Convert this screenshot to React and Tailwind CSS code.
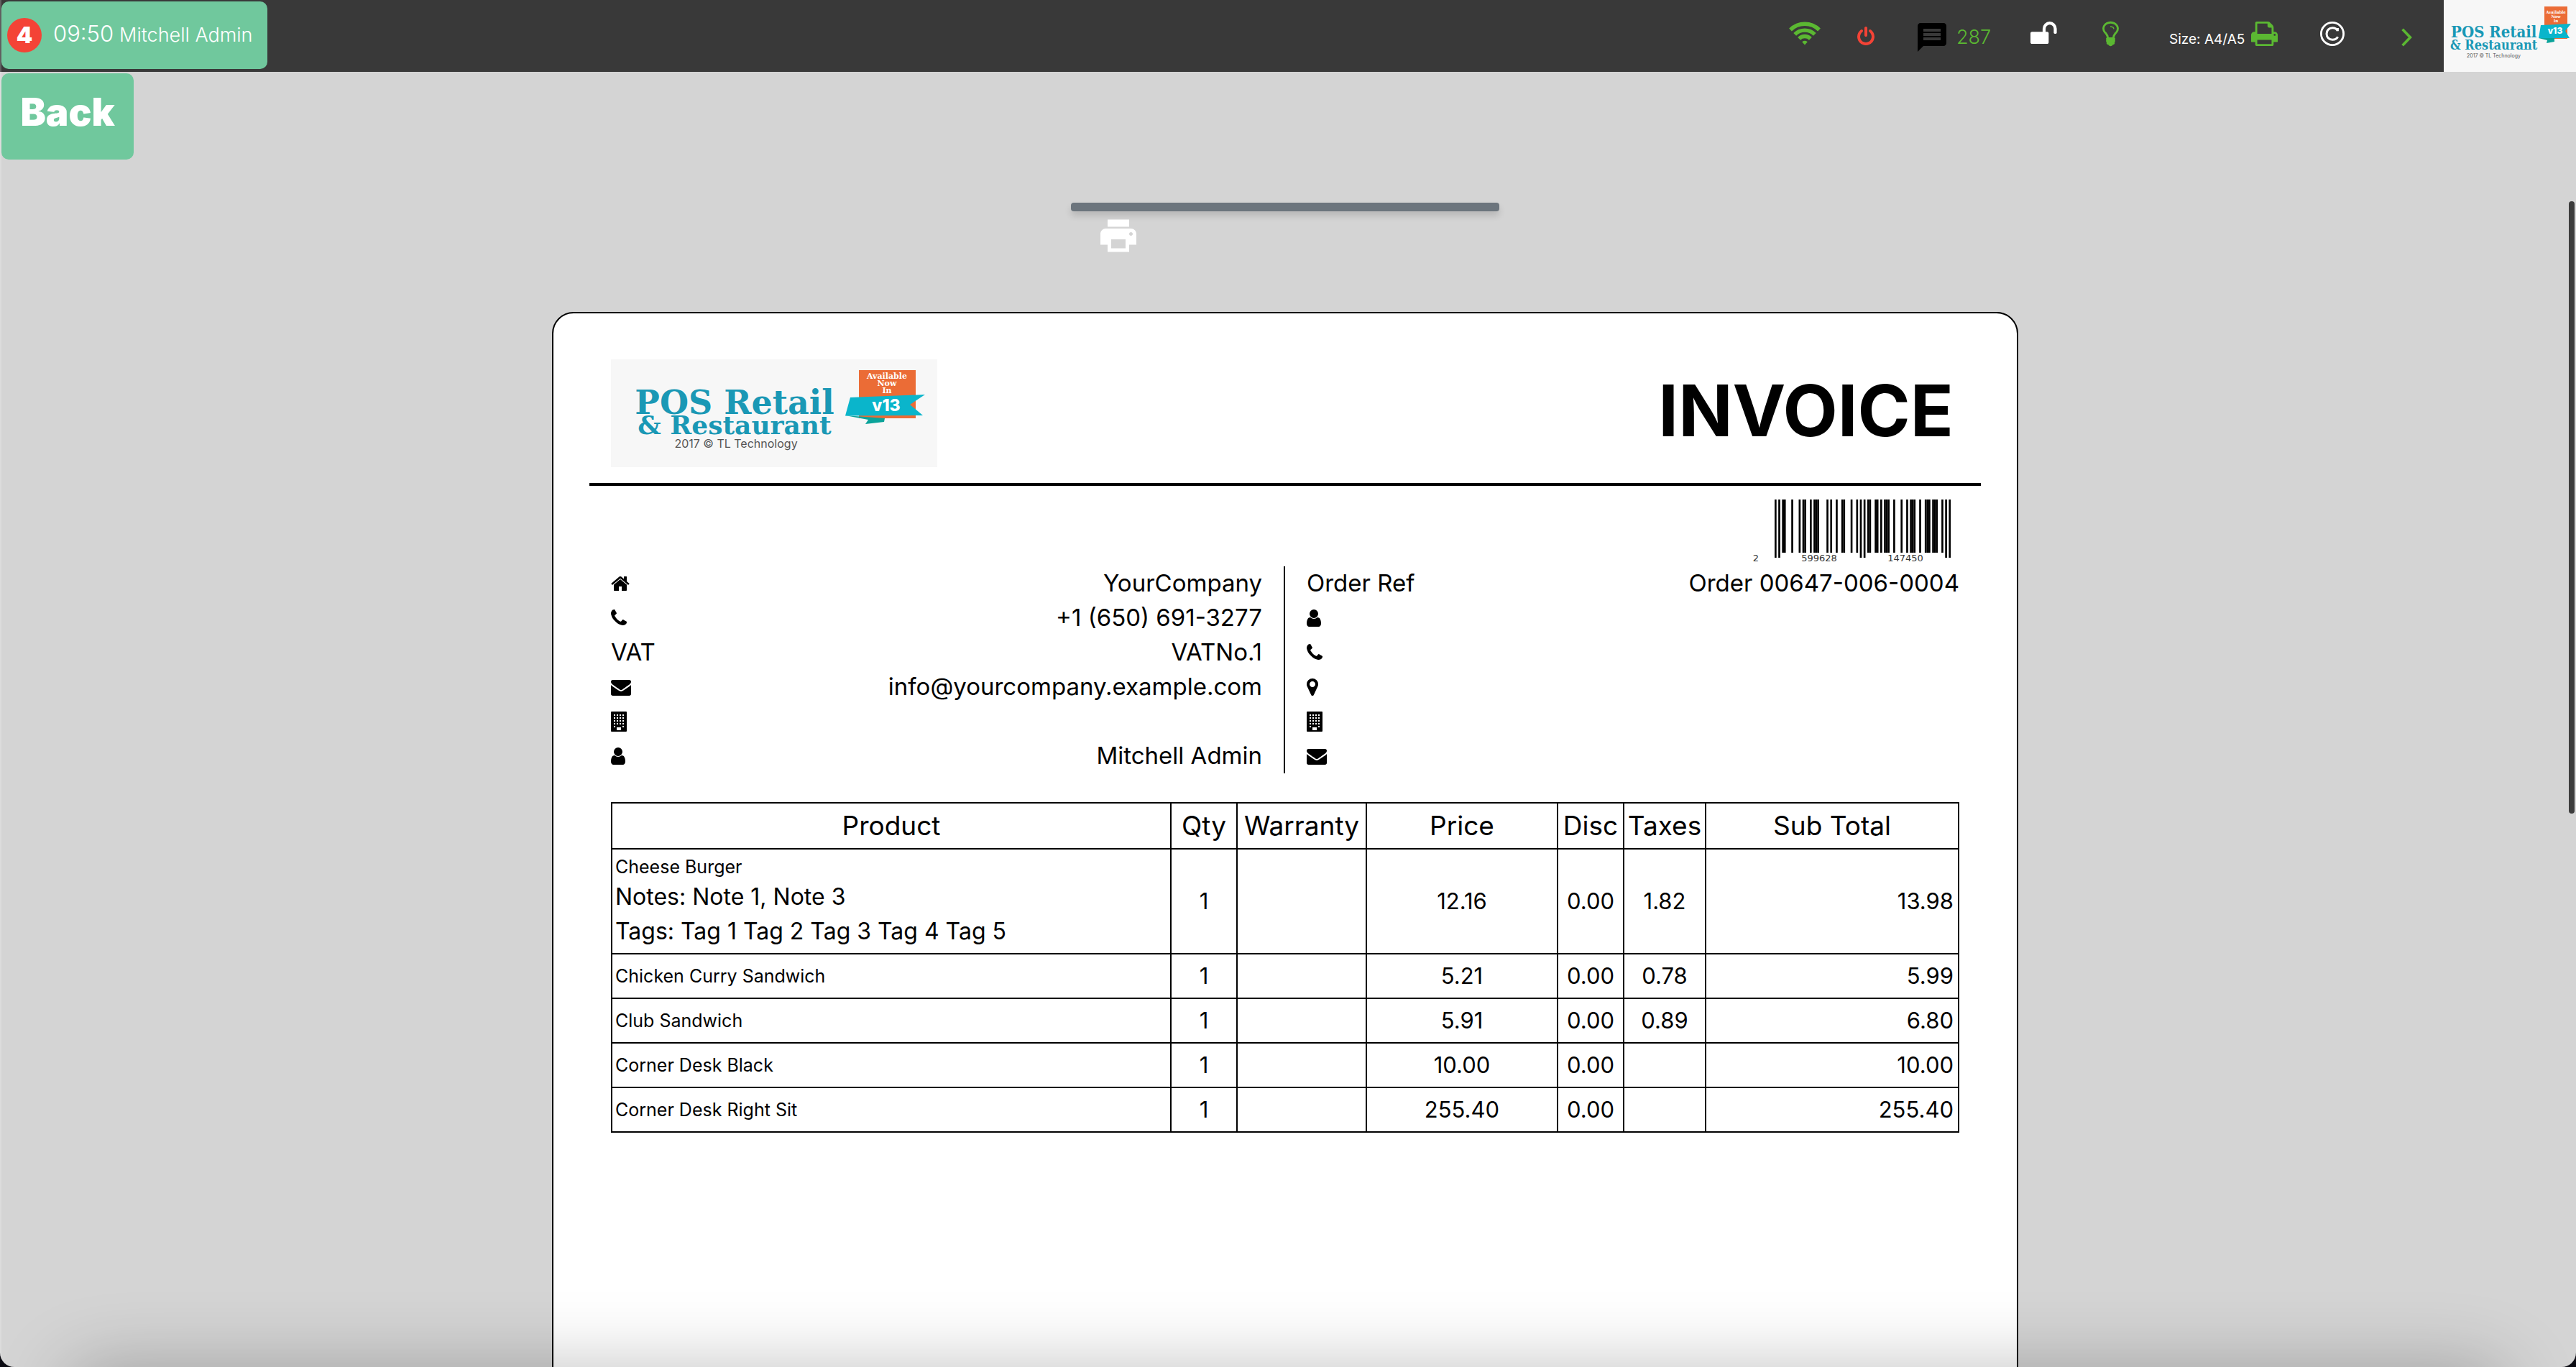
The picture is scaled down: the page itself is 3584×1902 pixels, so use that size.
import React from "react";
import { MdMessage, MdPrint } from "react-icons/md";

/* ---------- icons ---------- */

function Glyph({ x = 0, w = 1792, d, className }) {
  return (
    <svg viewBox={`${x} 0 ${w} 1792`} className={className} fill="currentColor" aria-hidden="true">
      <path d={d} />
    </svg>
  );
}

const POWER =
  "M1664 896q0 156-61 298t-164 245-245 164-298 61-298-61-245-164-164-245-61-298q0-182 80.5-343t226.5-270q43-32 95.5-25t83.5 50q32 42 24.5 94.5t-49.5 84.5q-98 74-151.5 181t-53.5 228q0 104 40.5 198.5t109.5 163.5 163.5 109.5 198.5 40.5 198.5-40.5 163.5-109.5 109.5-163.5 40.5-198.5q0-121-53.5-228t-151.5-181q-42-32-49.5-84.5t24.5-94.5q31-43 84-50t95 25q146 109 226.5 270t80.5 343zm-640-768v640q0 52-38 90t-90 38-90-38-38-90v-640q0-52 38-90t90-38 90 38 38 90z";
const HOME =
  "M1472 992v480q0 26-19 45t-45 19h-384v-384h-256v384h-384q-26 0-45-19t-19-45v-480q0-1 .5-3t.5-3l575-474 575 474q1 2 1 6zm223-69l-62 74q-8 9-21 11h-3q-13 0-21-7l-692-577-692 577q-12 8-24 7-13-2-21-11l-62-74q-8-10-7-23.5t11-21.5l719-599q32-26 76-26t76 26l244 204v-195q0-14 9-23t23-9h192q14 0 23 9t9 23v408l219 182q10 8 11 21.5t-7 23.5z";
const ENVELOPE =
  "M1792 710v794q0 66-47 113t-113 47h-1472q-66 0-113-47t-47-113v-794q44 49 101 87 362 246 497 345 57 42 92.5 65.5t94.5 48 110 24.5h2q51 0 110-24.5t94.5-48 92.5-65.5q170-123 498-345 57-39 100-87zm0-294q0 79-49 151t-122 123q-376 261-468 325-10 7-42.5 31t-54 38.5-52 32.5-57.5 27-50 9h-2q-23 0-50-9t-57.5-27-52-32.5-54-38.5-42.5-31q-91-64-262-182.5t-205-142.5q-62-42-117-115.5t-55-136.5q0-78 41.5-130t118.5-52h1472q65 0 112.5 47t47.5 113z";
const PHONE =
  "M1600 1240q0 27-10 70.5t-21 68.5q-21 50-122 106-94 51-186 51-27 0-52.5-3.5t-57.5-12.5-47.5-14.5-55.5-20.5-49-18q-98-35-175-83-128-79-264.5-215.5t-215.5-264.5q-48-77-83-175-3-9-18-49t-20.5-55.5-14.5-47.5-12.5-57.5-3.5-52.5q0-92 51-186 56-101 106-122 25-11 68.5-21t70.5-10q14 0 21 3 18 6 53 76 11 19 30 54t35 63.5 31 53.5q3 4 17.5 25t21.5 35.5 7 28.5q0 20-28.5 50t-62 55-62 53-28.5 46q0 9 5 22.5t8.5 20.5 14 24 11.5 19q76 137 174 235t235 174q2 1 19 11.5t24 14 20.5 8.5 22.5 5q18 0 46-28.5t53-62 55-62 50-28.5q14 0 28.5 7t35.5 21.5 25 17.5q25 15 53.5 31t63.5 35 54 30q70 35 76 53 3 7 3 21z";
const USER =
  "M1536 1399q0 109-62.5 187t-150.5 78h-854q-88 0-150.5-78t-62.5-187q0-85 8.5-160.5t31.5-152 58.5-131 94-89 134.5-34.5q131 128 313 128t313-128q76 0 134.5 34.5t94 89 58.5 131 31.5 152 8.5 160.5zm-256-887q0 159-112.5 271.5t-271.5 112.5-271.5-112.5-112.5-271.5 112.5-271.5 271.5-112.5 271.5 112.5 112.5 271.5z";
const MARKER =
  "M1152 640q0-106-75-181t-181-75-181 75-75 181 75 181 181 75 181-75 75-181zm256 0q0 109-33 179l-364 774q-16 33-47.5 52t-67.5 19-67.5-19-46.5-52l-365-774q-33-70-33-179 0-212 150-362t362-150 362 150 150 362z";
const UNLOCK =
  "M1728 576v256q0 26-19 45t-45 19h-64q-26 0-45-19t-19-45v-256q0-106-75-181t-181-75-181 75-75 181v192h96q40 0 68 28t28 68v576q0 40-28 68t-68 28h-960q-40 0-68-28t-28-68v-576q0-40 28-68t68-28h672v-192q0-185 131.5-316.5t316.5-131.5 316.5 131.5 131.5 316.5z";
const BULB =
  "M1120 576q0 13-9.5 22.5t-22.5 9.5-22.5-9.5-9.5-22.5q0-46-54-71t-106-25q-13 0-22.5-9.5t-9.5-22.5 9.5-22.5 22.5-9.5q50 0 99.5 16t87 54 37.5 90zm160 0q0-72-34.5-134t-90-101.5-123-62-136.5-22.5-136.5 22.5-123 62-90 101.5-34.5 134q0 101 68 180 10 11 30.5 33t30.5 33q128 153 141 298h228q13-145 141-298 10-11 30.5-33t30.5-33q68-79 68-180zm128 0q0 155-103 268-45 49-74.5 87t-59.5 95.5-34 107.5q47 28 47 82 0 37-25 64 25 27 25 64 0 52-45 81 13 23 13 47 0 46-31.5 71t-77.5 25q-20 44-60 70t-87 26-87-26-60-70q-46 0-77.5-25t-31.5-71q0-24 13-47-45-29-45-81 0-37 25-64-25-27-25-64 0-54 47-82-4-50-34-107.5t-59.5-95.5-74.5-87q-103-113-103-268 0-99 44.5-184.5t117-142 164-89 186.5-32.5 186.5 32.5 164 89 117 142 44.5 184.5z";
const PRINTER =
  "M448 1536h896v-256h-896v256zm0-640h896v-384h-160q-40 0-68-28t-28-68v-160h-640v640zm1152 64q0-26-19-45t-45-19-45 19-19 45 19 45 45 19 45-19 19-45zm128 0v416q0 13-9.5 22.5t-22.5 9.5h-224v160q0 40-28 68t-68 28h-960q-40 0-68-28t-28-68v-160h-224q-13 0-22.5-9.5t-9.5-22.5v-416q0-79 56.5-135.5t135.5-56.5h64v-544q0-40 28-68t68-28h672q40 0 88 20t76 48l152 152q28 28 48 76t20 88v256h64q79 0 135.5 56.5t56.5 135.5z";

const HomeIcon = () => <Glyph x={64} w={1664} d={HOME} className="h-7 w-[26px]" />;
const PhoneIcon = () => <Glyph x={192} w={1408} d={PHONE} className="h-7 w-[22px]" />;
const MailIcon = () => <Glyph d={ENVELOPE} className="size-7" />;
const UserIcon = () => <Glyph x={256} w={1280} d={USER} className="h-7 w-5" />;
const MarkerIcon = () => <Glyph x={384} w={1024} d={MARKER} className="h-7 w-4" />;

function BuildingIcon() {
  const windows = [];
  for (const y of [4, 8, 12, 16, 20]) {
    for (const x of [4, 8, 12, 16]) {
      if (y === 20 && (x === 8 || x === 12)) continue;
      windows.push(<rect key={`${x}-${y}`} x={x} y={y} width="2" height="2" fill="#fff" />);
    }
  }
  return (
    <svg viewBox="0 0 22 28" className="h-7 w-[22px]" aria-hidden="true">
      <rect width="22" height="28" rx="1" />
      {windows}
      <rect x="8" y="22" width="6" height="4" fill="#fff" />
    </svg>
  );
}

function WifiIcon() {
  return (
    <svg viewBox="0 0 44 33" className="h-[33px] w-11" fill="none" stroke="currentColor" strokeWidth="5.4" aria-hidden="true">
      <path d="M2 11.5a28.5 28.5 0 0 1 40 0" />
      <path d="M8.2 17.8a19.6 19.6 0 0 1 27.6 0" />
      <path d="M14.1 23.8a11.2 11.2 0 0 1 15.8 0" />
      <path d="M22 32.4l-3.8-4.2q3.8-2.9 7.6 0z" fill="currentColor" stroke="none" />
    </svg>
  );
}

function CopyrightIcon() {
  return (
    <svg viewBox="0 0 34 34" className="size-[34px]" fill="none" stroke="currentColor" aria-hidden="true">
      <circle cx="17" cy="17" r="15.6" strokeWidth="2.8" />
      <path d="M24.4 13.2V9M24.4 13q-2-4.2-7.2-4.2c-4.8 0-8.2 3.5-8.2 8.2s3.4 8.2 8.2 8.2q5.2 0 7.4-4" strokeWidth="3" />
    </svg>
  );
}

function ChevronIcon() {
  return (
    <svg viewBox="0 0 15 26" className="h-[26px] w-[15px]" fill="none" stroke="currentColor" strokeWidth="3.6" aria-hidden="true">
      <path d="M1.6 1.8L12.4 13 1.6 24.2" />
    </svg>
  );
}

/* ---------- brand logos ---------- */

function LogoSmall() {
  return (
    <svg viewBox="0 0 184 100" className="h-[100px] w-[184px] shrink-0 bg-[#f7f7f7]" role="img" aria-label="POS Retail & Restaurant">
      <g fontFamily="'DejaVu Serif Condensed','DejaVu Serif',serif" fontWeight="700">
        <rect x="140" y="9" width="32" height="45" fill="#eb6c36" />
        <g fontSize="6" fill="#fff" textAnchor="middle">
          <text x="156" y="19">Available</text>
          <text x="156" y="25">Now</text>
          <text x="156" y="31">In</text>
        </g>
        <text x="10" y="52" fontSize="22" fill="#1a98b5">POS Retail</text>
        <text x="9" y="69" fontSize="18" fill="#1a98b5">& Restaurant</text>
      </g>
      <path d="M132 53l12 3-1 4 11-2v-5z" fill="#0aa39a" />
      <path d="M135 35l42-2-8 10 6 10-43 0z" fill="#0ab5cb" />
      <text x="155" y="47" fontSize="12" fontWeight="800" fill="#fff" textAnchor="middle" fontFamily="Inter,sans-serif">v13</text>
      <text x="32" y="80" fontSize="7" fill="#555" fontFamily="Inter,sans-serif">2017 © TL Technology</text>
    </svg>
  );
}

function LogoLarge() {
  return (
    <svg viewBox="0 0 454 150" className="h-[150px] w-[454px] bg-[#f7f7f7]" role="img" aria-label="POS Retail & Restaurant">
      <g fontFamily="'DejaVu Serif',serif" fontWeight="700">
        <rect x="345" y="15" width="79" height="67" fill="#eb6c36" />
        <g fontSize="11" fill="#fff" textAnchor="middle">
          <text x="384" y="27">Available</text>
          <text x="384" y="37">Now</text>
          <text x="384" y="47">In</text>
        </g>
        <text x="172" y="76" fontSize="46" fill="#1a98b5" textAnchor="middle">POS Retail</text>
        <text x="172" y="104" fontSize="36" fill="#1a98b5" textAnchor="middle">& Restaurant</text>
      </g>
      <path d="M326 78l32 6-4 6 26-3 1-5z" fill="#0aa39a" />
      <path d="M333 53l104-4-21 14 18 15-108 0.5z" fill="#0ab5cb" />
      <text x="383" y="72" fontSize="23" fontWeight="800" fill="#fff" textAnchor="middle" fontFamily="Inter,sans-serif">v13</text>
      <text x="174" y="123" fontSize="16" fill="#555" textAnchor="middle" fontFamily="Inter,sans-serif">2017 © TL Technology</text>
    </svg>
  );
}

/* ---------- EAN-13 barcode ---------- */

const L = ["0001101", "0011001", "0010011", "0111101", "0100011", "0110001", "0101111", "0111011", "0110111", "0001011"];
const R = L.map((c) => c.replace(/./g, (b) => (b === "0" ? "1" : "0")));
const G = R.map((c) => c.split("").reverse().join(""));
const PARITY = ["LLLLLL", "LLGLGG", "LLGGLG", "LLGGGL", "LGLLGG", "LGGLLG", "LGGGLL", "LGLGLG", "LGLGGL", "LGGLGL"];

function Barcode({ code }) {
  const digits = code.split("").map(Number);
  const left = digits.slice(1, 7).map((d, i) => (PARITY[digits[0]][i] === "L" ? L[d] : G[d])).join("");
  const right = digits.slice(7).map((d) => R[d]).join("");
  const bits = `101${left}01010${right}101`;
  const unit = 245 / 95;
  return (
    <svg viewBox="0 0 280 88" className="h-[88px] w-[280px]" role="img" aria-label={`Barcode ${code}`}>
      {bits.split("").map((b, i) => {
        const guard = i < 3 || i > 91 || (i > 44 && i < 50);
        return b === "1" ? <rect key={i} x={35 + i * unit} y="0" width={unit + 0.1} height={guard ? 81 : 74} /> : null;
      })}
      <g fontFamily="'DejaVu Sans',sans-serif" fontSize="13" fill="#333" textAnchor="middle">
        <text x="9" y="86">{code[0]}</text>
        <text x="97" y="86">{code.slice(1, 7)}</text>
        <text x="217" y="86">{code.slice(7)}</text>
      </g>
    </svg>
  );
}

/* ---------- data ---------- */

const company = [
  [<HomeIcon />, "YourCompany"],
  [<PhoneIcon />, "+1 (650) 691-3277"],
  ["VAT", "VATNo.1"],
  [<MailIcon />, "info@yourcompany.example.com"],
  [<BuildingIcon />, ""],
  [<UserIcon />, "Mitchell Admin"],
];

const customer = [
  ["Order Ref", "Order 00647-006-0004"],
  [<UserIcon />, ""],
  [<PhoneIcon />, ""],
  [<MarkerIcon />, ""],
  [<BuildingIcon />, ""],
  [<MailIcon />, ""],
];

const lines = [
  { name: "Cheese Burger", extra: ["Notes: Note 1, Note 3", "Tags: Tag 1 Tag 2 Tag 3 Tag 4 Tag 5"], qty: "1", price: "12.16", disc: "0.00", tax: "1.82", total: "13.98" },
  { name: "Chicken Curry Sandwich", qty: "1", price: "5.21", disc: "0.00", tax: "0.78", total: "5.99" },
  { name: "Club Sandwich", qty: "1", price: "5.91", disc: "0.00", tax: "0.89", total: "6.80" },
  { name: "Corner Desk Black", qty: "1", price: "10.00", disc: "0.00", tax: "", total: "10.00" },
  { name: "Corner Desk Right Sit", qty: "1", price: "255.40", disc: "0.00", tax: "", total: "255.40" },
];

/* ---------- sections ---------- */

function TopBar() {
  return (
    <header className="flex h-[100px] shrink-0 items-center bg-[#393939] text-white">
      <button type="button" className="mb-0.5 ml-0.5 flex h-[94px] w-[370px] items-center rounded-[10px] bg-[#70c89d] pl-2 text-left">
        <span className="flex size-12 items-center justify-center rounded-full bg-[#f44336] text-[32px] leading-none font-black">4</span>
        <span className="ml-4 flex items-baseline gap-2 pb-1 font-light whitespace-nowrap">
          <span className="text-[31px]">09:50</span>
          <span className="text-[27px]">Mitchell Admin</span>
        </span>
      </button>
      <nav className="ml-auto flex items-center text-[#5bb832]">
        <button type="button" aria-label="Network" className="pb-2"><WifiIcon /></button>
        <button type="button" aria-label="Close session" className="ml-[51px] pt-0.5 text-[#f44336]">
          <Glyph x={128} w={1536} d={POWER} className="h-7 w-6" />
        </button>
        <button type="button" className="ml-[56px] flex items-center pt-1 font-light">
          <MdMessage className="size-12 text-black" />
          <span className="ml-2.5 w-[48px] text-left text-[27px]">287</span>
        </button>
        <button type="button" aria-label="Unlock" className="ml-[55px] pb-1.5 text-white">
          <Glyph x={64} w={1728} d={UNLOCK} className="h-10 w-[38px]" />
        </button>
        <button type="button" aria-label="Tips" className="ml-[62px] pb-1.5">
          <Glyph x={384} w={1024} d={BULB} className="h-10 w-[23px]" />
        </button>
        <button type="button" className="ml-[70px] flex items-center pb-1.5">
          <span className="w-[104px] pt-4 text-left text-[19px] whitespace-nowrap text-white">Size: A4/A5</span>
          <Glyph x={64} w={1664} d={PRINTER} className="ml-2.5 h-10 w-[37px]" />
        </button>
        <button type="button" aria-label="Copyright" className="ml-[59px] pb-1.5 text-white"><CopyrightIcon /></button>
        <button type="button" aria-label="Next" className="ml-[79px] pt-1"><ChevronIcon /></button>
      </nav>
      <a href="#" className="ml-11"><LogoSmall /></a>
    </header>
  );
}

function InfoRows({ rows }) {
  return rows.map(([label, value], i) => (
    <div key={i} className="flex h-12 items-center justify-between px-[30px] whitespace-nowrap">
      <dt>{label}</dt>
      <dd>{value}</dd>
    </div>
  ));
}

function Invoice() {
  return (
    <article className="mx-auto mt-[140px] min-h-[1600px] w-full max-w-[2040px] shrink-0 rounded-[30px] border-2 border-black bg-white px-[50px] pt-16 text-[33px] text-black">
      <div className="flex items-center justify-between pr-[38px] pl-[30px]">
        <LogoLarge />
        <h1 className="pb-2 text-[99px] leading-none font-bold">INVOICE</h1>
      </div>
      <hr className="mt-[22px] border-t-4 border-black" />
      <div className="flex h-[112px] justify-end pt-[19px] pr-[42px]">
        <Barcode code="2599628147450" />
      </div>
      <div className="grid grid-cols-2">
        <dl className="border-r-2 border-black"><InfoRows rows={company} /></dl>
        <dl><InfoRows rows={customer} /></dl>
      </div>
      <div className="mt-10 px-[30px]">
        <table className="w-full table-fixed border-collapse text-center text-[31px] [&_td]:border-2 [&_td]:border-black [&_th]:border-2 [&_th]:border-black">
          <colgroup>
            <col />
            <col className="w-[92px]" />
            <col className="w-[180px]" />
            <col className="w-[266px]" />
            <col className="w-[92px]" />
            <col className="w-[114px]" />
            <col className="w-[352px]" />
          </colgroup>
          <thead>
            <tr className="h-16 text-[37px] whitespace-nowrap">
              {["Product", "Qty", "Warranty", "Price", "Disc", "Taxes", "Sub Total"].map((h) => (
                <th key={h} scope="col" className="p-0 font-normal">{h}</th>
              ))}
            </tr>
          </thead>
          <tbody>
            {lines.map((l) => (
              <tr key={l.name} className="h-[62px]">
                <td className={l.extra ? "px-1 py-1.5 text-left" : "px-1 text-left"}>
                  <p className="text-[25px] leading-9">{l.name}</p>
                  {l.extra && l.extra.map((t) => <p key={t} className="text-[32px] leading-[48px]">{t}</p>)}
                </td>
                <td>{l.qty}</td>
                <td></td>
                <td>{l.price}</td>
                <td>{l.disc}</td>
                <td>{l.tax}</td>
                <td className="pr-1.5 text-right">{l.total}</td>
              </tr>
            ))}
          </tbody>
        </table>
      </div>
    </article>
  );
}

export default function App() {
  return (
    <div className="h-screen overflow-hidden bg-[#0b0b12] font-['Inter',sans-serif]">
      <div className="relative flex h-full flex-col overflow-hidden rounded-b-[20px] bg-[#d4d4d4]">
        <TopBar />
        <main className="flex min-h-0 flex-1 flex-col overflow-hidden pr-2">
          <button type="button" className="mt-0.5 ml-0.5 h-[120px] w-[184px] shrink-0 rounded-[10px] bg-[#70c89d] pb-3 text-[53px] leading-none font-black text-white">
            Back
          </button>
          <button
            type="button"
            aria-label="Print"
            className="mx-auto mt-[60px] flex h-3 w-[596px] shrink-0 items-start rounded bg-[#6c757d] pl-9 text-white shadow-[0_6px_10px_rgba(0,0,0,0.14)]"
          >
            <MdPrint className="mt-4 size-[60px] shrink-0" />
          </button>
          <Invoice />
        </main>
        <div className="absolute inset-y-0 left-0 w-0.5 bg-white/20" />
        <div className="absolute top-[280px] right-0.5 h-[852px] w-2 rounded-full bg-[#3c3c3c]" />
        <div className="absolute right-[94px] -bottom-[100px] left-[90px] h-[100px] rounded-full shadow-[0_0_100px_rgba(0,0,0,0.25)]" />
      </div>
    </div>
  );
}
